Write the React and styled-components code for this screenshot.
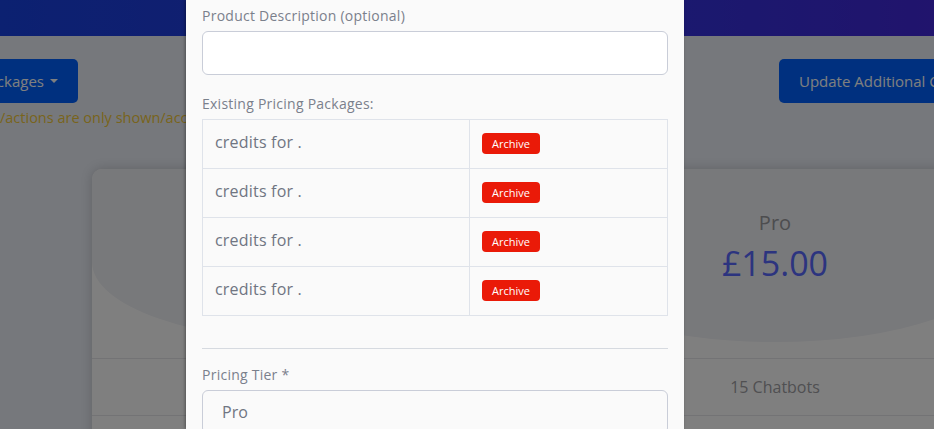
import React from 'react'
import styled, { createGlobalStyle } from 'styled-components'

const GlobalStyle = createGlobalStyle`
    html, body {
        margin: 0;
        padding: 0;
        overflow: hidden;
    }
    body {
        font-family: 'Open Sans', 'Lato', sans-serif;
        background: #ecf0f8;
    }
    * {
        box-sizing: border-box;
    }
`

const packages = [1, 2, 3, 4]

const tiers = [
    { name: 'Basic', price: '£5.00', bots: '5 Chatbots' },
    { name: 'Pro', price: '£15.00', bots: '15 Chatbots' },
    { name: 'Business', price: '£45.00', bots: '50 Chatbots' },
]

export default function App() {
    return (
        <Page>
            <GlobalStyle />
            <TopBar />
            <Main>
                <Toolbar>
                    <LeftSlot>
                        <PrimaryButton>Pricing Packages <Caret /></PrimaryButton>
                    </LeftSlot>
                    <PrimaryButton>Update Additional Credits</PrimaryButton>
                </Toolbar>
                <Warning>
                    <Cut>Note: some buttons</Cut>
                    /actions are only shown/accessible to admin users of this account.
                </Warning>
                <PricingCard>
                    {tiers.map((t) => (
                        <TierColumn key={t.name}>
                            <TierHead>
                                <TierName>{t.name}</TierName>
                                <TierPrice>{t.price}</TierPrice>
                            </TierHead>
                            <TierRow>{t.bots}</TierRow>
                            <TierRow>Unlimited messages</TierRow>
                        </TierColumn>
                    ))}
                </PricingCard>
            </Main>

            <Overlay />
            <Modal>
                <Label>Product Description (optional)</Label>
                <Input />
                <Label $top={19}>Existing Pricing Packages:</Label>
                <Table>
                    <tbody>
                        {packages.map((p) => (
                            <tr key={p}>
                                <NameCell>credits for .</NameCell>
                                <ActionCell>
                                    <ArchiveBadge>Archive</ArchiveBadge>
                                </ActionCell>
                            </tr>
                        ))}
                    </tbody>
                </Table>
                <Divider />
                <Label>Pricing Tier *</Label>
                <SelectBox>Pro</SelectBox>
            </Modal>
        </Page>
    )
}

const Page = styled.div`
    position: relative;
    height: 100vh;
    overflow: hidden;
`

const TopBar = styled.div`
    height: 36px;
    background: linear-gradient(90deg, #1842e2 0%, #2f36e0 60%, #4228da 100%);
`

const Main = styled.div`
    padding-top: 23px;
`

const Toolbar = styled.div`
    display: flex;
    align-items: center;
    gap: 701px;
`

const LeftSlot = styled.div`
    width: 78px;
    flex-shrink: 0;
    display: flex;
    justify-content: flex-end;
`

const PrimaryButton = styled.button`
    flex-shrink: 0;
    height: 44px;
    padding: 0 20px;
    border: none;
    border-radius: 5px;
    background: #0061fe;
    color: #ffffff;
    font-family: 'Open Sans', sans-serif;
    font-size: 15px;
    white-space: nowrap;
    display: flex;
    align-items: center;
    gap: 6px;
`

const Caret = styled.span`
    width: 0;
    height: 0;
    border-left: 4px solid transparent;
    border-right: 4px solid transparent;
    border-top: 4px solid #ffffff;
`

const Warning = styled.div`
    display: flex;
    white-space: nowrap;
    margin-top: 5px;
    font-size: 14.5px;
    line-height: 20px;
    color: #f2c93a;
`

const Cut = styled.span`
    width: 0;
    display: flex;
    justify-content: flex-end;
`

const PricingCard = styled.div`
    margin: 41px 0 0 92px;
    width: 1366px;
    display: grid;
    grid-template-columns: repeat(3, 1fr);
    background: #ffffff;
    border-radius: 10px;
    overflow: hidden;
    box-shadow: 0 0 12px rgba(0, 0, 0, 0.18);
`

const TierColumn = styled.div`
    display: flex;
    flex-direction: column;
`

const TierHead = styled.div`
    height: 173px;
    margin-bottom: 16px;
    background: #f1f2f6;
    border-radius: 0 0 50% 50% / 0 0 80px 80px;
    display: flex;
    flex-direction: column;
    align-items: center;
    padding-top: 41px;
`

const TierName = styled.div`
    font-size: 20px;
    line-height: 26px;
    color: #9a9a9e;
`

const TierPrice = styled.div`
    margin-top: 5px;
    font-size: 34px;
    line-height: 44px;
    color: #5868ff;
`

const TierRow = styled.div`
    height: 57px;
    border-top: 1px solid #e6e6ea;
    display: flex;
    align-items: center;
    justify-content: center;
    font-size: 16px;
    color: #a0a0a4;
`

const Overlay = styled.div`
    position: absolute;
    inset: 0;
    background: rgba(0, 0, 0, 0.5);
`

const Modal = styled.div`
    position: absolute;
    top: 0;
    bottom: 0;
    left: 186px;
    width: 498px;
    padding: 6px 16px 0;
    background: #fafafa;
    box-shadow: -1px 0 3px rgba(0, 0, 0, 0.35);
    overflow: hidden;
`

const Label = styled.div`
    margin-top: ${(p) => p.$top || 0}px;
    margin-bottom: 5px;
    font-size: 14px;
    line-height: 20px;
    letter-spacing: 0.25px;
    color: #7a808c;
`

const Input = styled.div`
    height: 44px;
    border: 1px solid #c9cdd8;
    border-radius: 6px;
    background: #ffffff;
`

const Table = styled.table`
    width: 100%;
    border-collapse: collapse;
    margin-bottom: 32px;
`

const NameCell = styled.td`
    width: 267px;
    height: 49px;
    padding: 0 12px 4px;
    border: 1px solid #dfe3ea;
    font-size: 16px;
    letter-spacing: 0.2px;
    color: #6f7582;
    vertical-align: middle;
`

const ActionCell = styled.td`
    height: 49px;
    padding: 0 12px 4px;
    border: 1px solid #dfe3ea;
    vertical-align: middle;
`

const ArchiveBadge = styled.span`
    display: inline-flex;
    align-items: center;
    justify-content: center;
    width: 58px;
    height: 21px;
    border-radius: 4px;
    background: #ea1a08;
    color: #ffffff;
    font-size: 11px;
`

const Divider = styled.div`
    height: 1px;
    background: #d6dae0;
    margin-bottom: 16px;
`

const SelectBox = styled.div`
    height: 44px;
    padding: 0 19px;
    border: 1px solid #c9cdd8;
    border-radius: 6px;
    display: flex;
    align-items: center;
    font-size: 16px;
    color: #6f7582;
    background: #fafafa;
`
